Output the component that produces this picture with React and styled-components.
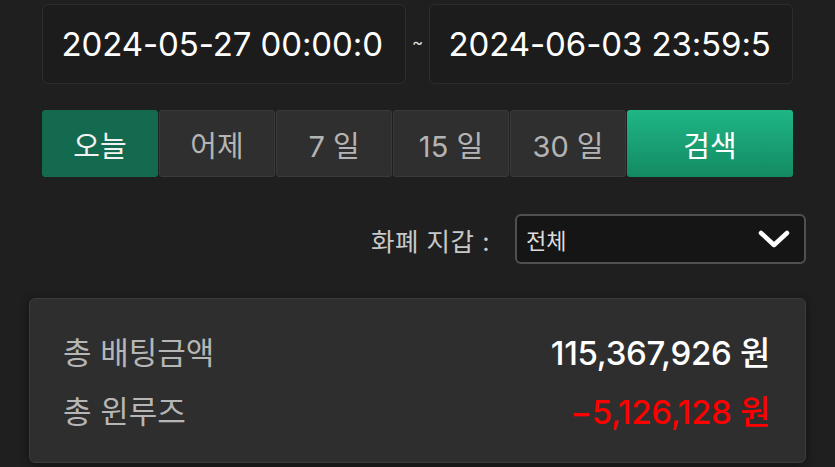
import React from "react";
import styled, { createGlobalStyle } from "styled-components";

const GlobalStyle = createGlobalStyle`
  html, body {
    margin: 0;
    padding: 0;
    background: #1f1f1f;
  }
  body {
    font-family: "Inter", "Noto Sans CJK KR", sans-serif;
    color: #fff;
    overflow: hidden;
  }
`;

const quickButtons = [
  { label: "오늘", active: true },
  { label: "어제" },
  { label: "7 일" },
  { label: "15 일" },
  { label: "30 일" },
];

export default function App() {
  return (
    <>
      <GlobalStyle />
      <Page>
        <DateRow>
          <DateBox>
            <DateText>2024-05-27 00:00:00</DateText>
          </DateBox>
          <Tilde>~</Tilde>
          <DateBox>
            <DateText>2024-06-03 23:59:59</DateText>
          </DateBox>
        </DateRow>
        <ButtonRow>
          {quickButtons.map((b) => (
            <QuickButton key={b.label} $active={b.active}>
              {b.label}
            </QuickButton>
          ))}
          <SearchButton>검색</SearchButton>
        </ButtonRow>
        <FilterRow>
          <FilterLabel>화폐 지갑 :</FilterLabel>
          <Select>
            <SelectText>전체</SelectText>
            <svg width="34" height="22" viewBox="0 0 34 22">
              <path
                d="M4 5 L17 17 L30 5"
                fill="none"
                stroke="#fff"
                strokeWidth="4.5"
                strokeLinecap="round"
                strokeLinejoin="round"
              />
            </svg>
          </Select>
        </FilterRow>
        <SummaryCard>
          <SummaryRow>
            <SummaryLabel>총 배팅금액</SummaryLabel>
            <SummaryValue>115,367,926 원</SummaryValue>
          </SummaryRow>
          <SummaryRow>
            <SummaryLabel>총 윈루즈</SummaryLabel>
            <SummaryValue $negative>−5,126,128 원</SummaryValue>
          </SummaryRow>
        </SummaryCard>
      </Page>
    </>
  );
}

const Page = styled.div`
  display: flex;
  flex-direction: column;
  width: 835px;
  height: 467px;
  padding-top: 4px;
  box-sizing: border-box;
`;

const DateRow = styled.div`
  display: flex;
  align-items: center;
  margin-left: 42px;
  width: 751px;
`;

const DateBox = styled.div`
  width: 364px;
  height: 80px;
  box-sizing: border-box;
  border: 1.5px solid #2d2d2d;
  border-radius: 6px;
  background: #1c1c1c;
  display: flex;
  align-items: center;
  padding: 0 21px 0 18.5px;
`;

const DateText = styled.div`
  flex: 1;
  overflow: hidden;
  white-space: nowrap;
  font-size: 33px;
  color: #fff;
  letter-spacing: -0.1px;
`;

const Tilde = styled.div`
  width: 23px;
  text-align: center;
  font-size: 17px;
  color: #ddd;
  margin-top: -5px;
`;

const ButtonRow = styled.div`
  display: flex;
  gap: 1px;
  margin: 26px 0 0 42px;
  width: 751px;
  height: 67px;
`;

const QuickButton = styled.div`
  width: 116px;
  flex-shrink: 0;
  display: flex;
  align-items: center;
  justify-content: center;
  box-sizing: border-box;
  border-radius: 3px;
  font-size: 29px;
  color: ${(p) => (p.$active ? "#f2f2f2" : "#b4b4b4")};
  background: ${(p) => (p.$active ? "#136a4e" : "#2f2f2f")};
  border: 1px solid ${(p) => (p.$active ? "#136a4e" : "#3a3a3a")};
`;

const SearchButton = styled.div`
  flex: 1;
  display: flex;
  align-items: center;
  justify-content: center;
  border-radius: 3px;
  font-size: 29px;
  color: #fff;
  background: linear-gradient(180deg, #1fb686 0%, #138a62 100%);
`;

const FilterRow = styled.div`
  display: flex;
  align-items: center;
  justify-content: flex-end;
  gap: 25px;
  margin-top: 37px;
  width: 806px;
`;

const FilterLabel = styled.div`
  font-size: 25.5px;
  color: #c8c8c8;
  letter-spacing: 0.5px;
`;

const Select = styled.div`
  width: 291px;
  height: 50px;
  box-sizing: border-box;
  border: 2px solid #505050;
  border-radius: 6px;
  background: #151515;
  display: flex;
  align-items: center;
  justify-content: space-between;
  padding: 0 13px 0 9px;
`;

const SelectText = styled.div`
  font-size: 22px;
  color: #dcdcdc;
`;

const SummaryCard = styled.div`
  margin: 34px 0 0 29px;
  width: 777px;
  height: 165px;
  box-sizing: border-box;
  background: #2e2e2e;
  border: 1.5px solid #3c3c3f;
  border-radius: 6px;
  box-shadow: 0 2px 10px rgba(0, 0, 0, 0.45);
  padding: 22px 35px 0 33px;
  display: flex;
  flex-direction: column;
`;

const SummaryRow = styled.div`
  display: flex;
  align-items: center;
  justify-content: space-between;
  height: 59px;
`;

const SummaryLabel = styled.div`
  font-size: 31px;
  color: #b6b6b6;
`;

const SummaryValue = styled.div`
  font-size: 33px;
  font-weight: 500;
  letter-spacing: -0.3px;
  color: ${(p) => (p.$negative ? "#ff0000" : "#ffffff")};
`;
